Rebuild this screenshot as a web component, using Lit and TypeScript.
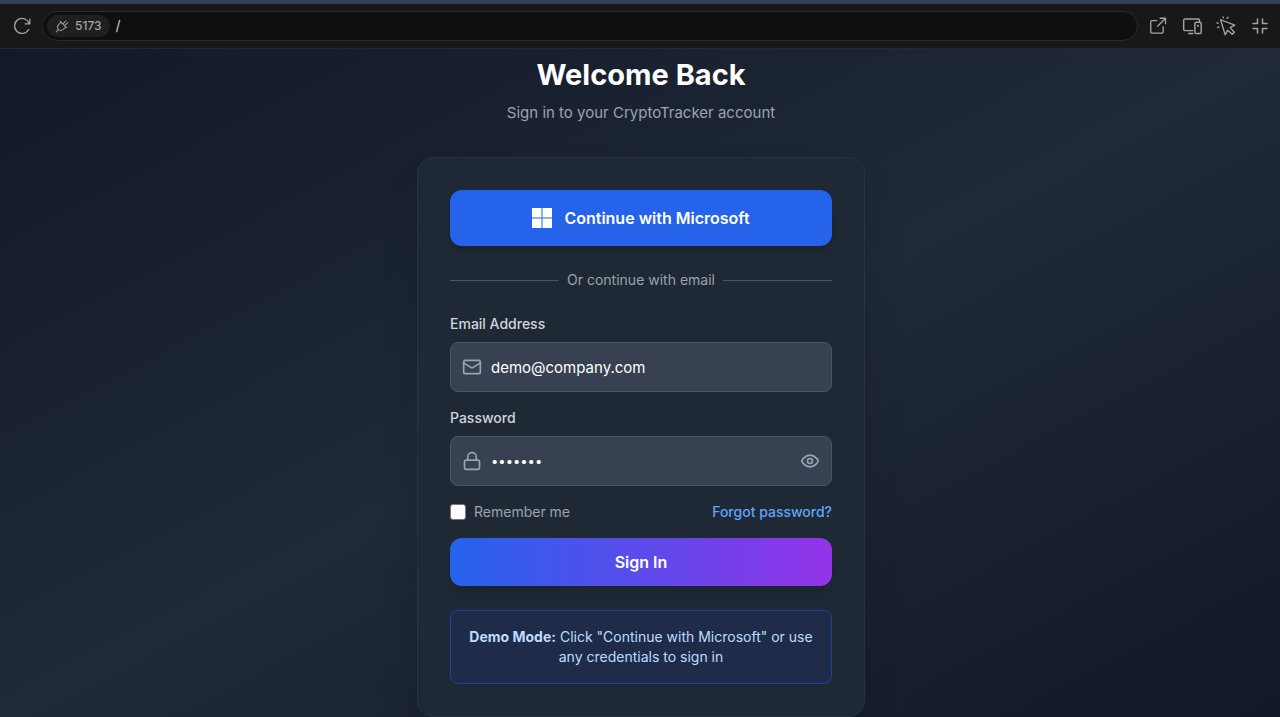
import { LitElement, html, css, svg } from "lit";
import { customElement, state } from "lit/decorators.js";

const stroke = (size: number, width: number, body: unknown) => html`
  <svg width=${size} height=${size} viewBox="0 0 24 24" fill="none" stroke="currentColor"
    stroke-width=${width} stroke-linecap="round" stroke-linejoin="round" aria-hidden="true">${body}</svg>`;

const icons = {
  reload: stroke(20, 1.5, svg`<path d="M20 16.2A9 9 0 1 1 20.6 9M21.4 3.6v5.700h-5.700"/>`),
  plug: stroke(14, 1.8, svg`<path d="M2 22l4.500-4.500M8 7.500l9 9M8 7.500L6.200 9.300a5.500 5.500 0 0 0 0 8.200 5.500 5.500 0 0 0 8.200 0L17 16.500l2-2.500a5.500 5.500 0 0 0-8.500-8.500L8 7.500" stroke="none"/><path d="M2 22l4-4M9 4l11 11M10.500 5.500L6 10a5.600 5.600 0 0 0 8 8l4.500-4.500M13.500 8.500L19 3M16.500 11.500L22 6"/>`),
  external: stroke(20, 1.6, svg`<path d="M10.500 5.500H4.500A1.200 1.200 0 0 0 3.300 6.700V19.300a1.200 1.200 0 0 0 1.200 1.200H17a1.200 1.200 0 0 0 1.200-1.200V13M14.500 2.700H21V9.200M21 2.700L11.500 12.200"/>`),
  devices: stroke(20, 1.7, svg`<path d="M13 17.500H3.500A1.500 1.500 0 0 1 2 16V5a1.500 1.500 0 0 1 1.500-1.500h16A1.500 1.500 0 0 1 21 5v2M8 21h5"/><rect x="15.500" y="7.500" width="7.500" height="13.500" rx="1.500"/><path d="M19.200 11v1.500"/>`),
  pointer: stroke(20, 1.6, svg`<path d="M5.500 4.500l17 6.500-5.500 3 5 5.500-2.500 2.500-5.500-5-3 5.500zM9 2.300l-.4-1.300M13.500 2.800l.9-1.500M2.400 8.700L1 8.300M3.500 13l-1.600.9"/>`),
  collapse: stroke(20, 1.8, svg`<path d="M9 3.500V9H3.500M15 3.500V9h5.500M9 20.500V15H3.500M15 20.500V15h5.500"/>`),
  mail: stroke(20, 2, svg`<rect x="2" y="4" width="20" height="16" rx="2"/><path d="m22 7-8.970 5.700a1.940 1.940 0 0 1-2.060 0L2 7"/>`),
  lock: stroke(20, 2, svg`<rect x="3" y="11" width="18" height="11" rx="2"/><path d="M7 11V7a5 5 0 0 1 10 0v4"/>`),
  eye: stroke(20, 2, svg`<path d="M2 12s3-7 10-7 10 7 10 7-3 7-10 7-10-7-10-7Z"/><circle cx="12" cy="12" r="3"/>`),
};

@customElement("preview-toolbar")
export class PreviewToolbar extends LitElement {
  static styles = css`
    :host { display: block; background: #181818; border-top: 4px solid #354055; border-bottom: 1px solid #262829; color: #a3a3a3; font-family: Inter, sans-serif; }
    .bar { display: flex; align-items: center; height: 44px; padding: 0 10px 0 12px; gap: 10px; }
    .address { flex: 1; min-width: 0; display: flex; align-items: center; gap: 6px; height: 28px; padding-left: 4px; border: 1px solid #292929; border-radius: 15px; background: #0f0f0f; }
    .port { display: flex; align-items: center; gap: 6px; height: 22px; padding: 0 8px; border-radius: 11px; background: #1f1f1f; font-size: 12px; line-height: 16px; font-weight: 500; }
    .path { flex: 1; min-width: 0; color: #d4d4d4; background: none; border: 0; padding: 0; outline: none; font: 14px/20px Inter, sans-serif; }
    .actions { display: flex; gap: 14px; }
    button { font-family: inherit; color: inherit; border: 0; padding: 0; background: none; cursor: pointer; }
    svg { display: block; }
  `;

  render() {
    return html`
      <div class="bar">
        <button aria-label="Reload">${icons.reload}</button>
        <div class="address">
          <button class="port">${icons.plug}<span>5173</span></button>
          <input class="path" aria-label="Path" .value=${"/"} />
        </div>
        <div class="actions">
          <button aria-label="Open in browser">${icons.external}</button>
          <button aria-label="Device view">${icons.devices}</button>
          <button aria-label="Select element">${icons.pointer}</button>
          <button aria-label="Collapse">${icons.collapse}</button>
        </div>
      </div>
    `;
  }
}

@customElement("app-root")
export class AppRoot extends LitElement {
  @state() private showPassword = false;

  static styles = css`
    * { box-sizing: border-box; }
    :host { display: flex; flex-direction: column; min-height: 100vh; font-family: Inter, sans-serif; font-size: 14px; line-height: 20px; }
    main { flex: 1; display: flex; justify-content: center; padding: 8px 16px 0 18px; background: linear-gradient(to bottom right, #131929, #1f2937, #131827); }
    .content { width: 100%; max-width: 448px; }
    header { text-align: center; margin-bottom: 32px; }
    h1 { margin: 0 0 8px; color: #fff; font-size: 29px; line-height: 36px; font-weight: 700; }
    .subtitle { margin: 0; color: #9ca3af; font-size: 15px; line-height: 24px; }
    .card { padding: 32px; border: 1px solid #26343f; border-radius: 16px; background: #1e2935; box-shadow: 0 24px 48px -12px rgba(0, 0, 0, 0.2); }
    button, input { font-family: inherit; }
    button { cursor: pointer; }
    .primary { display: flex; align-items: center; justify-content: center; gap: 12px; width: 100%; border: 0; border-radius: 12px; padding: 12px 16px; color: #fff; font-size: 16px; line-height: 24px; font-weight: 600; box-shadow: 0 10px 15px -3px rgba(0, 0, 0, 0.1), 0 4px 6px -4px rgba(0, 0, 0, 0.1); }
    .microsoft { padding: 16px; background: #2563eb; }
    .signin { background: linear-gradient(to right, #2563eb, #9333ea); }
    .divider { display: flex; align-items: center; gap: 8px; margin: 24px 0; color: #9ca3af; }
    .divider::before, .divider::after { content: ""; flex: 1; border-top: 1px solid #4b5563; }
    form { display: flex; flex-direction: column; gap: 16px; }
    .field { display: flex; flex-direction: column; gap: 8px; }
    .field label { color: #d1d5db; font-weight: 500; }
    .box { display: flex; align-items: center; gap: 9px; padding: 0 11px; border: 1px solid #4b5563; border-radius: 8px; background: #374151; color: #9ca3af; }
    .box input { flex: 1; min-width: 0; height: 48px; padding: 0; border: 0; outline: none; background: none; color: #fff; font-size: 15px; line-height: 24px; }
    .box input[type="password"] { font-size: 13px; }
    .eye { padding: 0; border: 0; background: none; color: inherit; }
    svg { display: block; }
    .options { display: flex; align-items: center; justify-content: space-between; color: #9ca3af; }
    .remember { display: flex; align-items: center; gap: 8px; }
    .check { appearance: none; width: 16px; height: 16px; margin: 0; border: 1px solid #767676; border-radius: 3px; background: #fff; }
    .check:checked { background: #2563eb; }
    a { color: #60a5fa; font-weight: 500; text-decoration: none; }
    .demo { margin: 24px 0 0; padding: 16px; border: 1px solid #20409c; border-radius: 8px; background: #1e2c4a; color: #bfdbfe; text-align: center; }
    .demo strong { font-weight: 700; }
  `;

  private toggle() {
    this.showPassword = !this.showPassword;
  }

  render() {
    return html`
      <preview-toolbar></preview-toolbar>
      <main>
        <div class="content">
          <header>
            <h1>Welcome Back</h1>
            <p class="subtitle">Sign in to your CryptoTracker account</p>
          </header>
          <section class="card">
            <button class="primary microsoft">
              <svg width="20" height="20" viewBox="0 0 20 20" fill="currentColor" aria-hidden="true">
                <path d="M0 0h9.500v9.500H0zM10.500 0H20v9.500h-9.500zM0 10.500h9.500V20H0zM10.500 10.500H20V20h-9.500z" />
              </svg>
              <span>Continue with Microsoft</span>
            </button>
            <div class="divider">Or continue with email</div>
            <form @submit=${(e: Event) => e.preventDefault()}>
              <div class="field">
                <label for="email">Email Address</label>
                <div class="box">${icons.mail}<input id="email" type="email" .value=${"demo@company.com"} /></div>
              </div>
              <div class="field">
                <label for="password">Password</label>
                <div class="box">
                  ${icons.lock}
                  <input id="password" type=${this.showPassword ? "text" : "password"} .value=${"demo123"} />
                  <button class="eye" type="button" aria-label="Show password" @click=${this.toggle}>${icons.eye}</button>
                </div>
              </div>
              <div class="options">
                <label class="remember"><input class="check" type="checkbox" />Remember me</label>
                <a href="#">Forgot password?</a>
              </div>
              <button class="primary signin" type="submit">Sign In</button>
            </form>
            <p class="demo"><strong>Demo Mode:</strong> Click "Continue with Microsoft" or use any credentials to sign in</p>
          </section>
        </div>
      </main>
    `;
  }
}
